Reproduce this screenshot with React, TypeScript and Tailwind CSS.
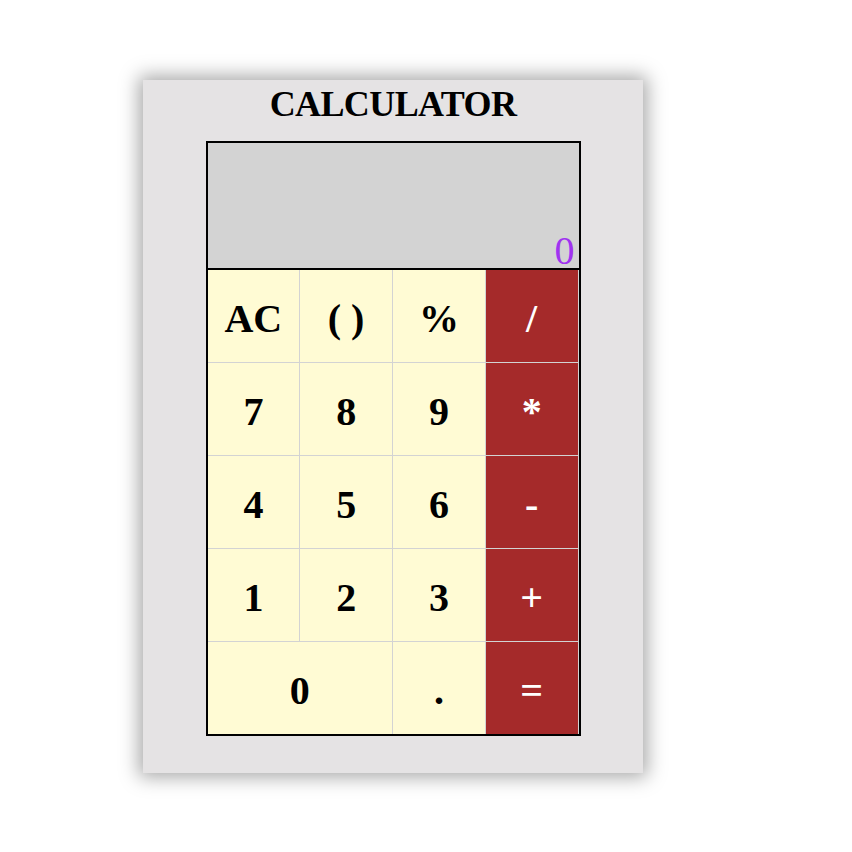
const keys = [
  { label: "AC", op: false },
  { label: "( )", op: false },
  { label: "%", op: false },
  { label: "/", op: true },
  { label: "7", op: false },
  { label: "8", op: false },
  { label: "9", op: false },
  { label: "*", op: true },
  { label: "4", op: false },
  { label: "5", op: false },
  { label: "6", op: false },
  { label: "-", op: true },
  { label: "1", op: false },
  { label: "2", op: false },
  { label: "3", op: false },
  { label: "+", op: true },
  { label: "0", op: false, wide: true },
  { label: ".", op: false },
  { label: "=", op: true },
];

export default function App() {
  return (
    <div className="min-h-screen bg-white pl-[143px] pt-[80px] font-['Liberation_Serif',serif]">
      <div className="flex h-[693px] w-[500px] flex-col items-center bg-[#e5e3e4] shadow-[0_0_18px_4px_rgba(0,0,0,0.35)]">
        {/* Title */}
        <h1 className="mb-[16px] pt-[4px] text-[36px] font-bold leading-[41px] tracking-[-0.6px] text-black">
          CALCULATOR
        </h1>

        {/* Calculator body */}
        <div className="w-[375px] border-2 border-black">
          <div className="flex h-[127px] items-end justify-end border-b-2 border-black bg-[#d3d3d3] pr-[4px]">
            <span className="text-[40px] leading-[34px] text-[#a032f0]">0</span>
          </div>
          <div className="grid grid-cols-4 gap-px bg-[#d3d3d3] pr-px">
            {keys.map((k) => (
              <button
                key={k.label}
                className={
                  "flex h-[92px] items-center justify-center pt-[5px] text-[40px] font-bold " +
                  (k.op ? "bg-[#a52a2a] text-white " : "bg-[#fffbd4] text-black ") +
                  (k.wide ? "col-span-2" : "")
                }
              >
                {k.label}
              </button>
            ))}
          </div>
        </div>
      </div>
    </div>
  );
}
